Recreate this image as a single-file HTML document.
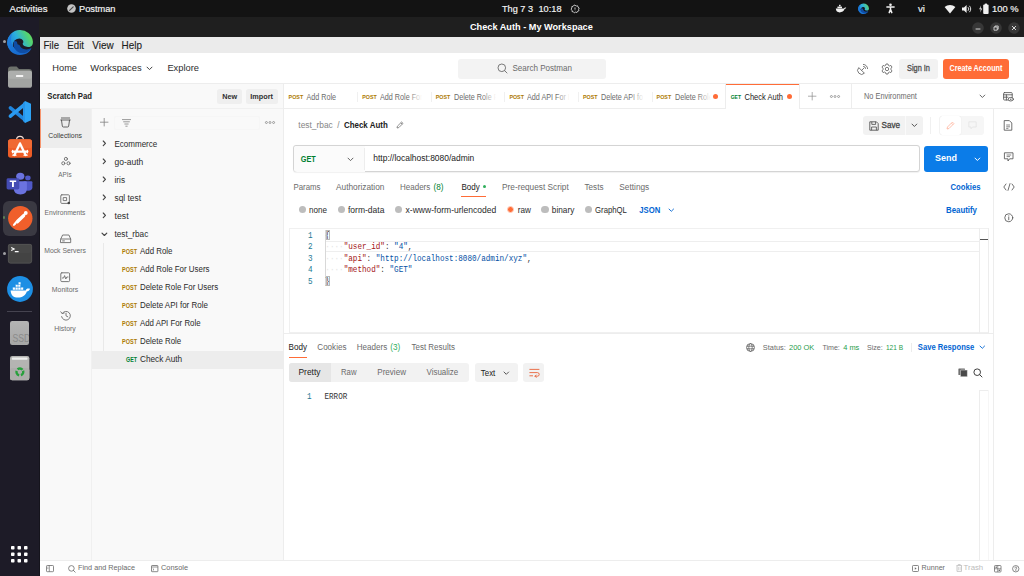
<!DOCTYPE html>
<html lang="vi">
<head>
<meta charset="utf-8">
<title>Check Auth - My Workspace</title>
<style>
*{box-sizing:border-box;margin:0;padding:0}
html,body{width:1024px;height:576px;overflow:hidden;background:#fff}
body{font-family:"Liberation Sans",sans-serif;font-size:9px;color:#212121;position:relative;-webkit-font-smoothing:antialiased}
.abs{position:absolute}
.t{position:absolute;white-space:nowrap;line-height:1.15;transform-origin:0 50%}
svg{position:absolute;overflow:visible}
</style>
</head>
<body>
<!-- ===== request tabs strip ===== -->
<div class="abs" style="left:284.00px;top:84.00px;width:740.00px;height:24.50px;background:#fff;"></div>
<div class="abs" style="left:284.00px;top:108.30px;width:441.50px;height:1.00px;background:#ededed;"></div>
<div class="abs" style="left:799.20px;top:108.30px;width:225.00px;height:1.00px;background:#ededed;"></div>
<span class="t" style="left:288px;top:93px;font-size:6.17px;font-weight:bold;transform:translate(0.60px,0.02px) scaleX(0.8684);color:#ad7a03;line-height:7px;">POST</span>
<span class="t" style="left:306px;top:92px;font-size:8.26px;transform:translate(0.50px,0.54px) scaleX(0.8677);color:#6b6b6b;line-height:9px;">Add Role</span>
<div class="abs" style="left:357.20px;top:91.50px;width:0.80px;height:10.00px;background:#f0f0f0;"></div>
<span class="t" style="left:362px;top:93px;font-size:6.17px;font-weight:bold;transform:translate(0.20px,0.02px) scaleX(0.8684);color:#ad7a03;line-height:7px;">POST</span>
<div class="abs" style="left:380.10px;top:90px;width:41.90px;height:13px;overflow:hidden">
<span class="t" style="left:0px;top:2px;font-size:8.26px;transform:translate(0.00px,0.54px) scaleX(0.8750);color:#6b6b6b;line-height:9px;">Add Role For Users</span>
</div>
<div class="abs" style="left:408.00px;top:90.00px;width:14.00px;height:13.00px;background:linear-gradient(90deg,rgba(255,255,255,0),#fff)"></div>
<div class="abs" style="left:430.80px;top:91.50px;width:0.80px;height:10.00px;background:#f0f0f0;"></div>
<span class="t" style="left:435px;top:93px;font-size:6.17px;font-weight:bold;transform:translate(0.80px,0.02px) scaleX(0.8684);color:#ad7a03;line-height:7px;">POST</span>
<div class="abs" style="left:453.70px;top:90px;width:42.30px;height:13px;overflow:hidden">
<span class="t" style="left:0px;top:2px;font-size:8.26px;transform:translate(0.00px,0.54px) scaleX(0.8750);color:#6b6b6b;line-height:9px;">Delete Role For Users</span>
</div>
<div class="abs" style="left:482.00px;top:90.00px;width:14.00px;height:13.00px;background:linear-gradient(90deg,rgba(255,255,255,0),#fff)"></div>
<div class="abs" style="left:504.40px;top:91.50px;width:0.80px;height:10.00px;background:#f0f0f0;"></div>
<span class="t" style="left:509px;top:93px;font-size:6.17px;font-weight:bold;transform:translate(0.40px,0.02px) scaleX(0.8684);color:#ad7a03;line-height:7px;">POST</span>
<div class="abs" style="left:527.30px;top:90px;width:42.20px;height:13px;overflow:hidden">
<span class="t" style="left:0px;top:2px;font-size:8.26px;transform:translate(0.00px,0.54px) scaleX(0.8750);color:#6b6b6b;line-height:9px;">Add API For Role</span>
</div>
<div class="abs" style="left:555.50px;top:90.00px;width:14.00px;height:13.00px;background:linear-gradient(90deg,rgba(255,255,255,0),#fff)"></div>
<div class="abs" style="left:578.00px;top:91.50px;width:0.80px;height:10.00px;background:#f0f0f0;"></div>
<span class="t" style="left:583px;top:93px;font-size:6.17px;font-weight:bold;transform:translate(0.00px,0.02px) scaleX(0.8684);color:#ad7a03;line-height:7px;">POST</span>
<div class="abs" style="left:600.90px;top:90px;width:42.60px;height:13px;overflow:hidden">
<span class="t" style="left:0px;top:2px;font-size:8.26px;transform:translate(0.00px,0.54px) scaleX(0.8750);color:#6b6b6b;line-height:9px;">Delete API for Role</span>
</div>
<div class="abs" style="left:629.50px;top:90.00px;width:14.00px;height:13.00px;background:linear-gradient(90deg,rgba(255,255,255,0),#fff)"></div>
<div class="abs" style="left:651.60px;top:91.50px;width:0.80px;height:10.00px;background:#f0f0f0;"></div>
<span class="t" style="left:656px;top:93px;font-size:6.17px;font-weight:bold;transform:translate(0.60px,0.02px) scaleX(0.8684);color:#ad7a03;line-height:7px;">POST</span>
<div class="abs" style="left:674.50px;top:90px;width:36.00px;height:13px;overflow:hidden">
<span class="t" style="left:0px;top:2px;font-size:8.26px;transform:translate(0.00px,0.54px) scaleX(0.8750);color:#6b6b6b;line-height:9px;">Delete Role</span>
</div>
<div class="abs" style="left:696.50px;top:90.00px;width:14.00px;height:13.00px;background:linear-gradient(90deg,rgba(255,255,255,0),#fff)"></div>
<div class="abs" style="left:713.10px;top:94.00px;width:5.00px;height:5.00px;background:#ff6c37;border-radius:3px"></div>
<div class="abs" style="left:725.20px;top:91.50px;width:0.80px;height:10.00px;background:#f0f0f0;"></div>
<div class="abs" style="left:725.60px;top:84.00px;width:73.60px;height:1.40px;background:#ff6c37;"></div>
<div class="abs" style="left:725.20px;top:84.00px;width:0.80px;height:24.50px;background:#ededed;"></div>
<div class="abs" style="left:798.80px;top:84.00px;width:0.80px;height:24.50px;background:#ededed;"></div>
<span class="t" style="left:730px;top:93px;font-size:6.17px;font-weight:bold;transform:translate(0.70px,0.02px) scaleX(0.8114);color:#007f31;line-height:7px;">GET</span>
<span class="t" style="left:744px;top:92px;font-size:8.26px;transform:translate(0.50px,0.54px) scaleX(0.9109);color:#212121;line-height:9px;">Check Auth</span>
<div class="abs" style="left:786.80px;top:94.00px;width:5.00px;height:5.00px;background:#ff6c37;border-radius:3px"></div>
<svg style="left:807.80px;top:92.30px;" width="8.4" height="8.4" viewBox="0 0 8.4 8.4" fill="none"><path d="M4.2 .4 V8 M.4 4.2 H8" stroke="#8a8a8a" stroke-width=".7" stroke-linecap="round"/></svg>
<svg style="left:830.00px;top:95.00px;" width="10" height="3" viewBox="0 0 10 3" fill="none"><circle cx="1.4" cy="1.5" r="1" stroke="#6b6b6b" stroke-width=".6"/><circle cx="5" cy="1.5" r="1" stroke="#6b6b6b" stroke-width=".6"/><circle cx="8.6" cy="1.5" r="1" stroke="#6b6b6b" stroke-width=".6"/></svg>
<div class="abs" style="left:851.00px;top:84.00px;width:0.80px;height:24.50px;background:#ededed;"></div>
<span class="t" style="left:864px;top:92px;font-size:8.17px;transform:translate(0.00px,0.11px) scaleX(0.9048);color:#6b6b6b;line-height:9px;">No Environment</span>
<svg style="left:979.10px;top:94.40px;" width="6.8" height="4.8" viewBox="0 0 6.8 4.8" fill="none"><path d="M1 1.08 L3.40 3.48 L5.80 1.08" stroke="#555" stroke-width="0.90" stroke-linecap="round" stroke-linejoin="round"/></svg>
<!-- ===== right sidebar ===== -->
<div class="abs" style="left:993.30px;top:108.50px;width:0.90px;height:451.50px;background:#ededed;"></div>
<svg style="left:1002.80px;top:91.50px;" width="11" height="10" viewBox="0 0 11 10" fill="none"><rect x=".6" y=".6" width="8.6" height="7.4" rx=".8" stroke="#555" stroke-width=".85" fill="none" stroke-linejoin="round" stroke-linecap="round"/><path d="M.6 2.8 H9.2 M3.4 2.8 V8 M.6 5.2 H5" stroke="#555" stroke-width=".85" fill="none" stroke-linejoin="round" stroke-linecap="round"/><ellipse cx="7.8" cy="7.2" rx="2.6" ry="1.8" fill="#fff" stroke="#555" stroke-width=".85" fill="none" stroke-linejoin="round" stroke-linecap="round"/><circle cx="7.8" cy="7.2" r=".7" fill="#555"/></svg>
<svg style="left:1004.30px;top:119.50px;" width="8.5" height="11" viewBox="0 0 8.5 11" fill="none"><path d="M.6 .6 H5.4 L7.8 3 V10.2 H.6Z" stroke="#555" stroke-width=".85" fill="none" stroke-linejoin="round" stroke-linecap="round"/><path d="M2.2 5 H6 M2.2 6.8 H6 M2.2 8.4 H4.4" stroke="#555" stroke-width=".7"/></svg>
<svg style="left:1003.80px;top:151.60px;" width="10" height="10" viewBox="0 0 10 10" fill="none"><path d="M.8 .8 H9 V6.8 H5.6 L4 9 V6.8 H.8Z" stroke="#555" stroke-width=".85" fill="none" stroke-linejoin="round" stroke-linecap="round"/><path d="M2.6 3 H7.2 M2.6 4.6 H6" stroke="#555" stroke-width=".7"/></svg>
<svg style="left:1002.80px;top:182.50px;" width="12" height="8" viewBox="0 0 12 8" fill="none"><path d="M3 1 L.8 4 L3 7 M9 1 L11.2 4 L9 7 M7 .6 L5 7.4" stroke="#555" stroke-width=".85" fill="none" stroke-linejoin="round" stroke-linecap="round"/></svg>
<svg style="left:1003.80px;top:213.00px;" width="9.5" height="9.5" viewBox="0 0 9.5 9.5" fill="none"><circle cx="4.75" cy="4.75" r="4" stroke="#555" stroke-width=".85" fill="none" stroke-linejoin="round" stroke-linecap="round"/><path d="M4.75 4.2 V6.8 M4.75 2.8 V3" stroke="#555" stroke-width=".85" fill="none" stroke-linejoin="round" stroke-linecap="round"/></svg>
<!-- ===== breadcrumb ===== -->
<span class="t" style="left:298px;top:119px;font-size:8.36px;transform:translate(0.30px,0.68px) scaleX(1.0034);color:#858585;line-height:10px;">test_rbac</span>
<span class="t" style="left:337px;top:119px;font-size:8.36px;transform:translate(0.30px,0.68px);color:#858585;line-height:10px;">/</span>
<span class="t" style="left:344px;top:119px;font-size:8.36px;font-weight:bold;transform:translate(0.00px,0.68px) scaleX(0.9494);color:#212121;line-height:10px;">Check Auth</span>
<svg style="left:395.50px;top:121.00px;" width="8" height="8" viewBox="0 0 8 8" fill="none"><path d="M1 7 L1.4 5.2 L5.6 1 L7 2.4 L2.8 6.6Z M4.8 1.8 L6.2 3.2" stroke="#6b6b6b" stroke-width=".75" stroke-linejoin="round"/></svg>
<div class="abs" style="left:862.50px;top:115.70px;width:60.00px;height:19.50px;background:#f2f2f2;border-radius:3px"></div>
<div class="abs" style="left:905.30px;top:115.70px;width:0.80px;height:19.50px;background:#fafafa;"></div>
<svg style="left:868.50px;top:120.50px;" width="10" height="10" viewBox="0 0 10 10" fill="none"><path d="M.8 .8 H7.4 L9.2 2.6 V9.2 H.8Z" stroke="#4a4a4a" stroke-width=".85" stroke-linejoin="round"/><path d="M2.8 .8 V3.4 H6.6 V.8 M2.6 9.2 V6 H7.4 V9.2" stroke="#4a4a4a" stroke-width=".8"/></svg>
<span class="t" style="left:881px;top:120px;font-size:8.55px;transform:translate(0.50px,0.24px) scaleX(0.9493);color:#444;line-height:10px;-webkit-text-stroke:.3px #444;">Save</span>
<svg style="left:911.10px;top:123.40px;" width="6.8" height="4.8" viewBox="0 0 6.8 4.8" fill="none"><path d="M1 1.08 L3.40 3.48 L5.80 1.08" stroke="#444" stroke-width="0.90" stroke-linecap="round" stroke-linejoin="round"/></svg>
<div class="abs" style="left:930.40px;top:117.00px;width:0.80px;height:17.00px;background:#f0f0f0;"></div>
<div class="abs" style="left:939.00px;top:115.70px;width:44.50px;height:19.50px;background:#f6f6f6;border-radius:3px"></div>
<div class="abs" style="left:939.50px;top:116.20px;width:21.50px;height:18.50px;background:#fff;border-radius:2.5px;box-shadow:0 0 1px rgba(0,0,0,.12)"></div>
<svg style="left:945.50px;top:120.50px;" width="9" height="9" viewBox="0 0 9 9" fill="none"><path d="M1 8 L1.5 6 L6.4 1.1 L7.9 2.6 L3 7.5Z M5.4 2.1 L6.9 3.6" stroke="#ffb39c" stroke-width=".8" stroke-linejoin="round"/></svg>
<svg style="left:967.50px;top:121.00px;" width="9" height="9" viewBox="0 0 9 9" fill="none"><path d="M.8 .8 H8.2 V6 H4.6 L3 7.8 V6 H.8Z" stroke="#e3e3e3" stroke-width=".8" stroke-linejoin="round"/></svg>
<!-- ===== url bar ===== -->
<div class="abs" style="left:292.70px;top:145.30px;width:627.00px;height:27.00px;background:#fff;border:1px solid #d4d4d4;border-radius:3px;box-shadow:0 .5px 1px rgba(0,0,0,.06)"></div>
<div class="abs" style="left:293.50px;top:146.00px;width:71.00px;height:25.50px;background:#fbfbfb;border-radius:3px 0 0 3px"></div>
<div class="abs" style="left:364.30px;top:148.00px;width:0.70px;height:21.50px;background:#ededed;"></div>
<span class="t" style="left:300px;top:153px;font-size:8.93px;font-weight:bold;transform:translate(0.80px,0.57px) scaleX(0.8171);color:#007f31;line-height:10px;">GET</span>
<svg style="left:346.50px;top:156.50px;" width="7" height="5" viewBox="0 0 7 5" fill="none"><path d="M1 1.12 L3.50 3.62 L6.00 1.12" stroke="#555" stroke-width="0.90" stroke-linecap="round" stroke-linejoin="round"/></svg>
<span class="t" style="left:373px;top:153px;font-size:8.36px;transform:translate(0.30px,0.38px) scaleX(1.0129);color:#212121;line-height:10px;">http://localhost:8080/admin</span>
<div class="abs" style="left:924.00px;top:146.00px;width:64.00px;height:25.50px;background:#0b7ce8;border-radius:3px"></div>
<span class="t" style="left:935px;top:153px;font-size:9.12px;font-weight:bold;transform:translate(0.00px,0.14px) scaleX(0.9867);color:#fff;line-height:10px;">Send</span>
<svg style="left:974.10px;top:156.80px;" width="6.8" height="4.8" viewBox="0 0 6.8 4.8" fill="none"><path d="M1 1.08 L3.40 3.48 L5.80 1.08" stroke="#fff" stroke-width="1.00" stroke-linecap="round" stroke-linejoin="round"/></svg>
<!-- ===== request sub tabs ===== -->
<span class="t" style="left:293px;top:181px;font-size:8.36px;transform:translate(0.50px,0.98px) scaleX(0.9375);color:#6b6b6b;line-height:10px;">Params</span>
<span class="t" style="left:336px;top:181px;font-size:8.36px;transform:translate(0.00px,0.98px) scaleX(0.9940);color:#6b6b6b;line-height:10px;">Authorization</span>
<span class="t" style="left:400px;top:181px;font-size:8.36px;transform:translate(0.00px,0.98px) scaleX(0.9590);color:#6b6b6b;line-height:10px;">Headers</span>
<span class="t" style="left:433px;top:181px;font-size:8.36px;transform:translate(0.50px,0.98px) scaleX(0.9788);color:#007f31;line-height:10px;">(8)</span>
<span class="t" style="left:461px;top:181px;font-size:8.36px;transform:translate(0.50px,0.98px) scaleX(0.9604);color:#212121;line-height:10px;">Body</span>
<div class="abs" style="left:483.00px;top:185.20px;width:3.00px;height:3.00px;background:#2fae5b;border-radius:2px"></div>
<div class="abs" style="left:461.00px;top:196.00px;width:25.00px;height:1.40px;background:#ff6c37;"></div>
<span class="t" style="left:502px;top:181px;font-size:8.36px;transform:translate(0.00px,0.98px) scaleX(0.9916);color:#6b6b6b;line-height:10px;">Pre-request Script</span>
<span class="t" style="left:584px;top:181px;font-size:8.36px;transform:translate(0.50px,0.98px) scaleX(0.9738);color:#6b6b6b;line-height:10px;">Tests</span>
<span class="t" style="left:619px;top:181px;font-size:8.36px;transform:translate(0.30px,0.98px) scaleX(0.9932);color:#6b6b6b;line-height:10px;">Settings</span>
<span class="t" style="left:950px;top:182px;font-size:8.17px;font-weight:bold;transform:translate(0.50px,0.91px) scaleX(0.9440);color:#0265d2;line-height:9px;">Cookies</span>
<!-- ===== body type ===== -->
<div class="abs" style="left:298.60px;top:206.10px;width:7.20px;height:7.20px;background:#bdbdbd;border-radius:4px"></div>
<span class="t" style="left:309px;top:204px;font-size:8.36px;transform:translate(0.00px,0.58px) scaleX(0.9680);color:#2b2b2b;line-height:10px;">none</span>
<div class="abs" style="left:337.60px;top:206.10px;width:7.20px;height:7.20px;background:#bdbdbd;border-radius:4px"></div>
<span class="t" style="left:348px;top:204px;font-size:8.36px;transform:translate(0.00px,0.58px) scaleX(1.0204);color:#2b2b2b;line-height:10px;">form-data</span>
<div class="abs" style="left:394.90px;top:206.10px;width:7.20px;height:7.20px;background:#bdbdbd;border-radius:4px"></div>
<span class="t" style="left:405px;top:204px;font-size:8.36px;transform:translate(0.50px,0.58px) scaleX(1.0256);color:#2b2b2b;line-height:10px;">x-www-form-urlencoded</span>
<div class="abs" style="left:541.40px;top:206.10px;width:7.20px;height:7.20px;background:#bdbdbd;border-radius:4px"></div>
<span class="t" style="left:551px;top:204px;font-size:8.36px;transform:translate(0.80px,0.58px) scaleX(0.9882);color:#2b2b2b;line-height:10px;">binary</span>
<div class="abs" style="left:584.60px;top:206.10px;width:7.20px;height:7.20px;background:#bdbdbd;border-radius:4px"></div>
<span class="t" style="left:595px;top:204px;font-size:8.36px;transform:translate(0.00px,0.58px) scaleX(0.9307);color:#2b2b2b;line-height:10px;">GraphQL</span>
<div class="abs" style="left:506.90px;top:205.90px;width:7.60px;height:7.60px;background:#ff6c37;border-radius:4px;border:1.4px solid #ffd3c2"></div>
<span class="t" style="left:517px;top:204px;font-size:8.36px;transform:translate(0.80px,0.58px) scaleX(0.9800);color:#2b2b2b;line-height:10px;">raw</span>
<span class="t" style="left:639px;top:204px;font-size:8.36px;font-weight:bold;transform:translate(0.30px,0.58px) scaleX(0.9225);color:#0265d2;line-height:10px;">JSON</span>
<svg style="left:668.40px;top:207.90px;" width="6.6" height="4.6" viewBox="0 0 6.6 4.6" fill="none"><path d="M1 1.03 L3.30 3.33 L5.60 1.03" stroke="#0265d2" stroke-width="0.90" stroke-linecap="round" stroke-linejoin="round"/></svg>
<span class="t" style="left:946px;top:204px;font-size:8.36px;font-weight:bold;transform:translate(0.00px,0.58px) scaleX(0.9400);color:#0265d2;line-height:10px;">Beautify</span>
<!-- ===== request body editor ===== -->
<div class="abs" style="left:288.70px;top:228.30px;width:699.50px;height:105.00px;background:#fff;border:1px solid #f0f0f0;border-right:none"></div>
<div class="abs" style="left:979.00px;top:228.30px;width:0.80px;height:105.00px;background:#ededed;"></div>
<div class="abs" style="left:987.60px;top:228.30px;width:0.80px;height:105.00px;background:#ededed;"></div>
<div class="abs" style="left:979.50px;top:238.80px;width:8.40px;height:1.60px;background:#555;"></div>
<div class="abs" style="left:325.20px;top:240.80px;width:654.00px;height:10.90px;background:#fff;border-top:1px solid #eeeeee;border-bottom:1px solid #eeeeee"></div>
<div class="abs" style="left:325.20px;top:230.00px;width:0.70px;height:56.00px;background:#d8d8d8;"></div>
<span class="t" style="left:308px;top:230px;font-size:8.50px;font-family:'Liberation Mono',monospace;transform:translate(0.00px,0.80px) scaleX(0.8988);color:#237893;line-height:10px;">1</span>
<span class="t" style="left:308px;top:242px;font-size:8.50px;font-family:'Liberation Mono',monospace;transform:translate(0.00px,0.30px) scaleX(0.8988);color:#237893;line-height:10px;">2</span>
<span class="t" style="left:308px;top:253px;font-size:8.50px;font-family:'Liberation Mono',monospace;transform:translate(0.00px,0.80px) scaleX(0.8988);color:#237893;line-height:10px;">3</span>
<span class="t" style="left:308px;top:265px;font-size:8.50px;font-family:'Liberation Mono',monospace;transform:translate(0.00px,0.30px) scaleX(0.8988);color:#237893;line-height:10px;">4</span>
<span class="t" style="left:308px;top:276px;font-size:8.50px;font-family:'Liberation Mono',monospace;transform:translate(0.00px,0.80px) scaleX(0.8988);color:#237893;line-height:10px;">5</span>
<span class="t" style="left:325px;top:242px;font-size:8.50px;font-family:'Liberation Mono',monospace;transform:translate(0.30px,0.30px) scaleX(0.8988);color:#e4e4e4;line-height:10px;">····</span>
<span class="t" style="left:325px;top:253px;font-size:8.50px;font-family:'Liberation Mono',monospace;transform:translate(0.30px,0.80px) scaleX(0.8988);color:#e4e4e4;line-height:10px;">····</span>
<span class="t" style="left:325px;top:265px;font-size:8.50px;font-family:'Liberation Mono',monospace;transform:translate(0.30px,0.30px) scaleX(0.8988);color:#e4e4e4;line-height:10px;">····</span>
<span class="t" style="left:325px;top:230px;font-size:8.50px;font-family:'Liberation Mono',monospace;transform:translate(0.30px,0.80px) scaleX(0.8988);color:#333;line-height:10px;">{</span>
<span class="t" style="left:343px;top:242px;font-size:8.50px;font-family:'Liberation Mono',monospace;transform:translate(0.64px,0.30px) scaleX(0.8988);color:#a31515;line-height:10px;">&quot;user_id&quot;</span>
<span class="t" style="left:384px;top:242px;font-size:8.50px;font-family:'Liberation Mono',monospace;transform:translate(0.90px,0.30px) scaleX(0.8988);color:#333;line-height:10px;">:&nbsp;</span>
<span class="t" style="left:394px;top:242px;font-size:8.50px;font-family:'Liberation Mono',monospace;transform:translate(0.07px,0.30px) scaleX(0.8988);color:#0451a5;line-height:10px;">&quot;4&quot;</span>
<span class="t" style="left:407px;top:242px;font-size:8.50px;font-family:'Liberation Mono',monospace;transform:translate(0.83px,0.30px) scaleX(0.8988);color:#333;line-height:10px;">,</span>
<span class="t" style="left:343px;top:253px;font-size:8.50px;font-family:'Liberation Mono',monospace;transform:translate(0.64px,0.80px) scaleX(0.8988);color:#a31515;line-height:10px;">&quot;api&quot;</span>
<span class="t" style="left:366px;top:253px;font-size:8.50px;font-family:'Liberation Mono',monospace;transform:translate(0.56px,0.80px) scaleX(0.8988);color:#333;line-height:10px;">:&nbsp;</span>
<span class="t" style="left:375px;top:253px;font-size:8.50px;font-family:'Liberation Mono',monospace;transform:translate(0.74px,0.80px) scaleX(0.8988);color:#0451a5;line-height:10px;">&quot;http://localhost:8080/admin/xyz&quot;</span>
<span class="t" style="left:527px;top:253px;font-size:8.50px;font-family:'Liberation Mono',monospace;transform:translate(0.04px,0.80px) scaleX(0.8988);color:#333;line-height:10px;">,</span>
<span class="t" style="left:343px;top:265px;font-size:8.50px;font-family:'Liberation Mono',monospace;transform:translate(0.64px,0.30px) scaleX(0.8988);color:#a31515;line-height:10px;">&quot;method&quot;</span>
<span class="t" style="left:380px;top:265px;font-size:8.50px;font-family:'Liberation Mono',monospace;transform:translate(0.32px,0.30px) scaleX(0.8988);color:#333;line-height:10px;">:&nbsp;</span>
<span class="t" style="left:389px;top:265px;font-size:8.50px;font-family:'Liberation Mono',monospace;transform:translate(0.49px,0.30px) scaleX(0.8988);color:#0451a5;line-height:10px;">&quot;GET&quot;</span>
<span class="t" style="left:325px;top:276px;font-size:8.50px;font-family:'Liberation Mono',monospace;transform:translate(0.30px,0.80px) scaleX(0.8988);color:#333;line-height:10px;">}</span>
<div class="abs" style="left:325.60px;top:229.80px;width:4.00px;height:10.40px;background:transparent;border:.6px solid #b9b9b9"></div>
<div class="abs" style="left:325.60px;top:275.80px;width:4.00px;height:10.40px;background:transparent;border:.6px solid #b9b9b9"></div>
<!-- ===== response ===== -->
<div class="abs" style="left:284.00px;top:333.40px;width:709.30px;height:0.90px;background:#ededed;"></div>
<span class="t" style="left:288px;top:341px;font-size:8.36px;transform:translate(0.50px,0.98px) scaleX(0.9709);color:#212121;line-height:10px;">Body</span>
<div class="abs" style="left:288.50px;top:356.50px;width:18.50px;height:1.40px;background:#ff6c37;"></div>
<span class="t" style="left:317px;top:341px;font-size:8.36px;transform:translate(0.30px,0.98px) scaleX(0.9668);color:#6b6b6b;line-height:10px;">Cookies</span>
<span class="t" style="left:356px;top:341px;font-size:8.36px;transform:translate(0.80px,0.98px) scaleX(0.9653);color:#6b6b6b;line-height:10px;">Headers</span>
<span class="t" style="left:390px;top:341px;font-size:8.36px;transform:translate(0.30px,0.98px) scaleX(0.9788);color:#2fae5b;line-height:10px;">(3)</span>
<span class="t" style="left:411px;top:341px;font-size:8.36px;transform:translate(0.50px,0.98px) scaleX(0.9554);color:#6b6b6b;line-height:10px;">Test Results</span>
<svg style="left:745.50px;top:342.70px;" width="9" height="9" viewBox="0 0 9 9" fill="none"><circle cx="4.5" cy="4.5" r="3.9" stroke="#555" stroke-width=".8"/><ellipse cx="4.5" cy="4.5" rx="1.7" ry="3.9" stroke="#555" stroke-width=".7"/><path d="M.7 3.2 H8.3 M.7 5.8 H8.3" stroke="#555" stroke-width=".7"/></svg>
<span class="t" style="left:762px;top:342px;font-size:7.50px;transform:translate(0.80px,0.68px) scaleX(0.9846);color:#6b6b6b;line-height:9px;">Status:</span>
<span class="t" style="left:789px;top:342px;font-size:7.50px;transform:translate(0.00px,0.68px) scaleX(0.9941);color:#1f9d4c;line-height:9px;">200 OK</span>
<span class="t" style="left:822px;top:342px;font-size:7.50px;transform:translate(0.40px,0.68px) scaleX(0.9414);color:#6b6b6b;line-height:9px;">Time:</span>
<span class="t" style="left:843px;top:342px;font-size:7.50px;transform:translate(0.20px,0.68px) scaleX(0.9900);color:#1f9d4c;line-height:9px;">4 ms</span>
<span class="t" style="left:867px;top:342px;font-size:7.50px;transform:translate(0.00px,0.68px) scaleX(0.9470);color:#6b6b6b;line-height:9px;">Size:</span>
<span class="t" style="left:885px;top:342px;font-size:7.50px;transform:translate(0.90px,0.68px) scaleX(0.8719);color:#1f9d4c;line-height:9px;">121 B</span>
<div class="abs" style="left:910.80px;top:342.50px;width:0.80px;height:9.50px;background:#ececec;"></div>
<span class="t" style="left:917px;top:342px;font-size:8.17px;font-weight:bold;transform:translate(0.80px,0.91px) scaleX(0.9372);color:#0265d2;line-height:9px;">Save Response</span>
<svg style="left:978.90px;top:345.30px;" width="6.6" height="4.6" viewBox="0 0 6.6 4.6" fill="none"><path d="M1 1.03 L3.30 3.33 L5.60 1.03" stroke="#0265d2" stroke-width="0.90" stroke-linecap="round" stroke-linejoin="round"/></svg>
<div class="abs" style="left:288.50px;top:363.00px;width:180.50px;height:18.80px;background:#f2f2f2;border-radius:3px"></div>
<div class="abs" style="left:288.50px;top:363.00px;width:42.30px;height:18.80px;background:#e6e6e6;border-radius:3px 0 0 3px"></div>
<span class="t" style="left:298px;top:368px;font-size:8.17px;transform:translate(0.50px,0.41px) scaleX(1.0310);color:#212121;line-height:9px;">Pretty</span>
<span class="t" style="left:341px;top:368px;font-size:8.17px;transform:translate(0.00px,0.41px) scaleX(0.9484);color:#6b6b6b;line-height:9px;">Raw</span>
<span class="t" style="left:377px;top:368px;font-size:8.17px;transform:translate(0.30px,0.41px) scaleX(0.9877);color:#6b6b6b;line-height:9px;">Preview</span>
<span class="t" style="left:426px;top:368px;font-size:8.17px;transform:translate(0.50px,0.41px) scaleX(0.9770);color:#6b6b6b;line-height:9px;">Visualize</span>
<div class="abs" style="left:474.50px;top:363.00px;width:43.30px;height:18.80px;background:#f2f2f2;border-radius:3px"></div>
<span class="t" style="left:480px;top:367px;font-size:8.55px;transform:translate(0.80px,0.54px) scaleX(0.9248);color:#212121;line-height:10px;">Text</span>
<svg style="left:503.20px;top:370.70px;" width="6.6" height="4.6" viewBox="0 0 6.6 4.6" fill="none"><path d="M1 1.03 L3.30 3.33 L5.60 1.03" stroke="#444" stroke-width="0.90" stroke-linecap="round" stroke-linejoin="round"/></svg>
<div class="abs" style="left:523.20px;top:363.00px;width:21.30px;height:18.80px;background:#f2f2f2;border-radius:3px"></div>
<svg style="left:528.50px;top:367.50px;" width="11" height="10" viewBox="0 0 11 10" fill="none"><path d="M.8 1.4 H10 M.8 4.6 H8.4 A1.8 1.8 0 0 1 8.4 8.2 H6 M.8 7.8 H3.6 M7.2 7 L6 8.2 L7.2 9.4" stroke="#e8633a" stroke-width=".9" stroke-linecap="round" stroke-linejoin="round"/></svg>
<svg style="left:958.00px;top:367.60px;" width="10" height="9" viewBox="0 0 10 9" fill="none"><rect x=".4" y=".4" width="6.6" height="6.6" rx=".6" fill="#6a6a6a"/><rect x="2.4" y="2" width="7" height="6.8" rx=".6" fill="#4a4a4a" stroke="#fff" stroke-width=".5"/></svg>
<svg style="left:973.00px;top:367.50px;" width="10" height="10" viewBox="0 0 10 10" fill="none"><circle cx="4.2" cy="4.2" r="3.3" stroke="#3f3f3f" stroke-width="1"/><path d="M6.6 6.6 L9 9" stroke="#3f3f3f" stroke-width="1" stroke-linecap="round"/></svg>
<span class="t" style="left:307px;top:391px;font-size:8.50px;font-family:'Liberation Mono',monospace;transform:translate(0.00px,0.80px) scaleX(0.8988);color:#237893;line-height:10px;">1</span>
<span class="t" style="left:324px;top:391px;font-size:8.50px;font-family:'Liberation Mono',monospace;transform:translate(0.50px,0.80px) scaleX(0.8939);color:#333;line-height:10px;">ERROR</span>
<div class="abs" style="left:979.00px;top:389.50px;width:0.80px;height:170.50px;background:#ededed;"></div>
<div class="abs" style="left:987.60px;top:389.50px;width:0.80px;height:170.50px;background:#f6f6f6;"></div>
<div class="abs" style="left:979.00px;top:389.50px;width:9.40px;height:0.80px;background:#ededed;"></div>
<!-- ===== sidebar ===== -->
<div class="abs" style="left:39.50px;top:84.00px;width:244.00px;height:476.00px;background:#f9f9f9;"></div>
<div class="abs" style="left:282.50px;top:84.00px;width:1.00px;height:476.00px;background:#ededed;"></div>
<div class="abs" style="left:39.50px;top:108.00px;width:243.00px;height:1.00px;background:#f0f0f0;"></div>
<span class="t" style="left:47px;top:91px;font-size:8.36px;font-weight:bold;transform:translate(0.30px,0.38px) scaleX(0.9251);color:#212121;line-height:10px;">Scratch Pad</span>
<div class="abs" style="left:217.00px;top:88.70px;width:25.20px;height:15.80px;background:#efefef;border-radius:2.5px"></div>
<span class="t" style="left:222px;top:92px;font-size:7.79px;font-weight:bold;transform:translate(0.30px,0.18px) scaleX(0.9365);color:#303030;line-height:9px;">New</span>
<div class="abs" style="left:245.50px;top:88.70px;width:32.00px;height:15.80px;background:#efefef;border-radius:2.5px"></div>
<span class="t" style="left:250px;top:92px;font-size:7.79px;font-weight:bold;transform:translate(0.30px,0.18px) scaleX(0.9367);color:#303030;line-height:9px;">Import</span>
<div class="abs" style="left:90.50px;top:109.00px;width:1.00px;height:451.00px;background:#f0f0f0;"></div>
<div class="abs" style="left:40.00px;top:108.50px;width:50.50px;height:39.00px;background:#ededed;"></div>
<div class="abs" style="left:39.50px;top:108.50px;width:0.90px;height:39.00px;background:#f7956e;"></div>
<svg style="left:59.50px;top:116.50px;" width="11" height="11" viewBox="0 0 11 11" fill="none"><path d="M1.4 1 H9.6 M.8 3 H10.2 M1.5 3.2 L2.3 9 Q2.4 10 3.4 10 H7.6 Q8.6 10 8.7 9 L9.5 3.2" stroke="#4a4a4a" stroke-width=".85" fill="none" stroke-linecap="round"/></svg>
<span class="t" style="left:48px;top:132px;font-size:6.93px;transform:translate(0.20px,0.09px) scaleX(0.9965);color:#3a3a3a;line-height:7px;">Collections</span>
<svg style="left:59.50px;top:155.50px;" width="11" height="12" viewBox="0 0 11 12" fill="none"><circle cx="5.9" cy="2.9" r="1.55" stroke="#6b6b6b" stroke-width=".9" fill="none" stroke-linecap="round" stroke-linejoin="round"/><circle cx="3.3" cy="7.3" r="1.55" stroke="#6b6b6b" stroke-width=".9" fill="none" stroke-linecap="round" stroke-linejoin="round"/><circle cx="8.5" cy="7.3" r="1.55" stroke="#6b6b6b" stroke-width=".9" fill="none" stroke-linecap="round" stroke-linejoin="round"/></svg>
<span class="t" style="left:58px;top:170px;font-size:6.93px;transform:translate(0.30px,0.59px) scaleX(0.9149);color:#6b6b6b;line-height:7px;">APIs</span>
<svg style="left:60.00px;top:194.00px;" width="11" height="11" viewBox="0 0 11 11" fill="none"><rect x=".8" y=".8" width="8.6" height="8.6" rx="1" stroke="#6b6b6b" stroke-width=".9" fill="none" stroke-linecap="round" stroke-linejoin="round"/><rect x="3.6" y="3.6" width="3" height="3" stroke="#6b6b6b" stroke-width=".9" fill="none" stroke-linecap="round" stroke-linejoin="round"/><circle cx="8.8" cy="9" r="1.3" fill="#444"/></svg>
<span class="t" style="left:44px;top:208px;font-size:6.93px;transform:translate(0.50px,0.89px) scaleX(0.9671);color:#6b6b6b;line-height:7px;">Environments</span>
<svg style="left:59.50px;top:233.50px;" width="11.5" height="9.5" viewBox="0 0 11.5 9.5" fill="none"><path d="M.8 5 L2.6 1 H8.9 L10.7 5 V8.6 H.8Z M.8 5 H10.7" stroke="#6b6b6b" stroke-width=".9" fill="none" stroke-linecap="round" stroke-linejoin="round"/><path d="M2.6 6.9 H4.4" stroke="#6b6b6b" stroke-width=".9" fill="none" stroke-linecap="round" stroke-linejoin="round"/></svg>
<span class="t" style="left:44px;top:247px;font-size:6.93px;transform:translate(0.20px,0.39px) scaleX(0.9862);color:#6b6b6b;line-height:7px;">Mock Servers</span>
<svg style="left:60.00px;top:271.50px;" width="10.5" height="10.5" viewBox="0 0 10.5 10.5" fill="none"><rect x=".8" y=".8" width="8.8" height="8.8" rx="1" stroke="#6b6b6b" stroke-width=".9" fill="none" stroke-linecap="round" stroke-linejoin="round"/><path d="M2.4 6 H3.6 L4.6 3.6 L5.8 7 L6.8 5 H8" stroke="#6b6b6b" stroke-width=".9" fill="none" stroke-linecap="round" stroke-linejoin="round"/></svg>
<span class="t" style="left:51px;top:286px;font-size:6.93px;transform:translate(0.80px,0.19px) scaleX(0.9966);color:#6b6b6b;line-height:7px;">Monitors</span>
<svg style="left:59.50px;top:309.50px;" width="11.5" height="11" viewBox="0 0 11.5 11" fill="none"><path d="M2.2 3.4 A4.4 4.4 0 1 1 1.6 6.6" stroke="#6b6b6b" stroke-width=".9" fill="none" stroke-linecap="round" stroke-linejoin="round"/><path d="M.8 1.8 L2.2 3.6 L4.2 3" stroke="#6b6b6b" stroke-width=".9" fill="none" stroke-linecap="round" stroke-linejoin="round"/><path d="M6 3.2 V5.8 L7.8 6.8" stroke="#6b6b6b" stroke-width=".9" fill="none" stroke-linecap="round" stroke-linejoin="round"/></svg>
<span class="t" style="left:54px;top:324px;font-size:6.93px;transform:translate(0.30px,0.59px) scaleX(0.9965);color:#6b6b6b;line-height:7px;">History</span>
<svg style="left:99.80px;top:118.30px;" width="8.4" height="8.4" viewBox="0 0 8.4 8.4" fill="none"><path d="M4.2 .4 V8 M.4 4.2 H8" stroke="#808080" stroke-width=".8" stroke-linecap="round"/></svg>
<svg style="left:122.00px;top:118.50px;" width="9" height="8" viewBox="0 0 9 8" fill="none"><path d="M.4 .6 H8.6 M1.6 2.8 H7.4 M2.8 5 H6.2 M3.8 7.2 H5.2" stroke="#808080" stroke-width=".8" stroke-linecap="round"/></svg>
<div class="abs" style="left:114.00px;top:115.50px;width:146.00px;height:14.00px;background:#f9f9f9;border:1px solid #f6f6f6;border-radius:2px"></div>
<svg style="left:122.00px;top:118.50px;" width="9" height="8" viewBox="0 0 9 8" fill="none"><path d="M.4 .6 H8.6 M1.6 2.8 H7.4 M2.8 5 H6.2 M3.8 7.2 H5.2" stroke="#808080" stroke-width=".8" stroke-linecap="round"/></svg>
<svg style="left:265.00px;top:121.00px;" width="10" height="3" viewBox="0 0 10 3" fill="none"><circle cx="1.4" cy="1.5" r="1" stroke="#6b6b6b" stroke-width=".6"/><circle cx="5" cy="1.5" r="1" stroke="#6b6b6b" stroke-width=".6"/><circle cx="8.6" cy="1.5" r="1" stroke="#6b6b6b" stroke-width=".6"/></svg>
<svg style="left:101.70px;top:140.30px;" width="4.6" height="6.6" viewBox="0 0 4.6 6.6" fill="none"><path d="M1.26 1 L3.45 3.30 L1.26 5.60" stroke="#444" stroke-width="1.15" stroke-linecap="round" stroke-linejoin="round"/></svg>
<span class="t" style="left:114px;top:138px;font-size:8.36px;transform:translate(0.50px,0.68px) scaleX(0.9598);color:#2b2b2b;line-height:10px;">Ecommerce</span>
<svg style="left:101.70px;top:158.40px;" width="4.6" height="6.6" viewBox="0 0 4.6 6.6" fill="none"><path d="M1.26 1 L3.45 3.30 L1.26 5.60" stroke="#444" stroke-width="1.15" stroke-linecap="round" stroke-linejoin="round"/></svg>
<span class="t" style="left:114px;top:156px;font-size:8.36px;transform:translate(0.50px,0.78px) scaleX(1.0158);color:#2b2b2b;line-height:10px;">go-auth</span>
<svg style="left:101.70px;top:176.20px;" width="4.6" height="6.6" viewBox="0 0 4.6 6.6" fill="none"><path d="M1.26 1 L3.45 3.30 L1.26 5.60" stroke="#444" stroke-width="1.15" stroke-linecap="round" stroke-linejoin="round"/></svg>
<span class="t" style="left:114px;top:174px;font-size:8.36px;transform:translate(0.50px,0.58px) scaleX(0.9833);color:#2b2b2b;line-height:10px;">iris</span>
<svg style="left:101.70px;top:194.40px;" width="4.6" height="6.6" viewBox="0 0 4.6 6.6" fill="none"><path d="M1.26 1 L3.45 3.30 L1.26 5.60" stroke="#444" stroke-width="1.15" stroke-linecap="round" stroke-linejoin="round"/></svg>
<span class="t" style="left:114px;top:192px;font-size:8.36px;transform:translate(0.50px,0.78px) scaleX(1.0006);color:#2b2b2b;line-height:10px;">sql test</span>
<svg style="left:101.70px;top:212.40px;" width="4.6" height="6.6" viewBox="0 0 4.6 6.6" fill="none"><path d="M1.26 1 L3.45 3.30 L1.26 5.60" stroke="#444" stroke-width="1.15" stroke-linecap="round" stroke-linejoin="round"/></svg>
<span class="t" style="left:114px;top:210px;font-size:8.36px;transform:translate(0.50px,0.78px) scaleX(1.0465);color:#2b2b2b;line-height:10px;">test</span>
<svg style="left:100.60px;top:231.60px;" width="6.8" height="4.8" viewBox="0 0 6.8 4.8" fill="none"><path d="M1 1.08 L3.40 3.48 L5.80 1.08" stroke="#444" stroke-width="1.15" stroke-linecap="round" stroke-linejoin="round"/></svg>
<span class="t" style="left:114px;top:228px;font-size:8.36px;transform:translate(0.50px,0.68px) scaleX(0.9830);color:#2b2b2b;line-height:10px;">test_rbac</span>
<div class="abs" style="left:103.00px;top:242.50px;width:0.80px;height:108.00px;background:#e9e9e9;"></div>
<div class="abs" style="left:91.50px;top:350.50px;width:191.50px;height:18.00px;background:#ededed;"></div>
<span class="t" style="left:122px;top:247px;font-size:6.27px;font-weight:bold;transform:translate(0.00px,0.96px) scaleX(0.8787);color:#ad7a03;line-height:7px;">POST</span>
<span class="t" style="left:140px;top:246px;font-size:8.36px;transform:translate(0.00px,0.48px) scaleX(0.9451);color:#2b2b2b;line-height:10px;">Add Role</span>
<span class="t" style="left:122px;top:265px;font-size:6.27px;font-weight:bold;transform:translate(0.00px,0.96px) scaleX(0.8787);color:#ad7a03;line-height:7px;">POST</span>
<span class="t" style="left:140px;top:264px;font-size:8.36px;transform:translate(0.00px,0.48px) scaleX(0.9482);color:#2b2b2b;line-height:10px;">Add Role For Users</span>
<span class="t" style="left:122px;top:283px;font-size:6.27px;font-weight:bold;transform:translate(0.00px,0.96px) scaleX(0.8787);color:#ad7a03;line-height:7px;">POST</span>
<span class="t" style="left:140px;top:282px;font-size:8.36px;transform:translate(0.00px,0.48px) scaleX(0.9469);color:#2b2b2b;line-height:10px;">Delete Role For Users</span>
<span class="t" style="left:122px;top:301px;font-size:6.27px;font-weight:bold;transform:translate(0.00px,0.86px) scaleX(0.8787);color:#ad7a03;line-height:7px;">POST</span>
<span class="t" style="left:140px;top:300px;font-size:8.36px;transform:translate(0.00px,0.38px) scaleX(0.9565);color:#2b2b2b;line-height:10px;">Delete API for Role</span>
<span class="t" style="left:122px;top:319px;font-size:6.27px;font-weight:bold;transform:translate(0.00px,0.96px) scaleX(0.8787);color:#ad7a03;line-height:7px;">POST</span>
<span class="t" style="left:140px;top:318px;font-size:8.36px;transform:translate(0.00px,0.48px) scaleX(0.9383);color:#2b2b2b;line-height:10px;">Add API For Role</span>
<span class="t" style="left:122px;top:337px;font-size:6.27px;font-weight:bold;transform:translate(0.00px,0.76px) scaleX(0.8787);color:#ad7a03;line-height:7px;">POST</span>
<span class="t" style="left:140px;top:336px;font-size:8.36px;transform:translate(0.00px,0.28px) scaleX(0.9455);color:#2b2b2b;line-height:10px;">Delete Role</span>
<span class="t" style="left:126px;top:355px;font-size:6.27px;font-weight:bold;transform:translate(0.00px,0.76px) scaleX(0.8535);color:#007f31;line-height:7px;">GET</span>
<span class="t" style="left:140px;top:354px;font-size:8.36px;transform:translate(0.00px,0.28px) scaleX(0.9871);color:#2b2b2b;line-height:10px;">Check Auth</span>
<!-- ===== status bar ===== -->
<div class="abs" style="left:39.50px;top:560.00px;width:984.50px;height:16.00px;background:#fff;border-top:1px solid #ededed"></div>
<svg style="left:45.50px;top:564.50px;" width="8" height="7.5" viewBox="0 0 8 7.5" fill="none"><rect x=".5" y=".5" width="7" height="6.2" rx=".8" stroke="#6b6b6b" stroke-width=".8"/><path d="M3.3 .5 V6.7 M1.4 2.2 H2.4 M1.4 3.6 H2.4" stroke="#6b6b6b" stroke-width=".7"/></svg>
<svg style="left:67.50px;top:564.50px;" width="8" height="8" viewBox="0 0 8 8" fill="none"><circle cx="3.4" cy="3.4" r="2.8" stroke="#6b6b6b" stroke-width=".8"/><path d="M5.4 5.4 L7.2 7.2" stroke="#6b6b6b" stroke-width=".8" stroke-linecap="round"/></svg>
<span class="t" style="left:78px;top:563px;font-size:7.22px;transform:translate(0.00px,0.18px) scaleX(1.0073);color:#6b6b6b;line-height:9px;">Find and Replace</span>
<svg style="left:151.00px;top:564.80px;" width="7.5" height="7.5" viewBox="0 0 7.5 7.5" fill="none"><rect x=".5" y=".5" width="6.4" height="6.2" rx=".6" stroke="#6b6b6b" stroke-width=".8"/><path d="M.5 2 H6.9 M1.8 3.6 L3 4.5 L1.8 5.4" stroke="#6b6b6b" stroke-width=".7"/></svg>
<span class="t" style="left:161px;top:563px;font-size:7.22px;transform:translate(0.00px,0.18px) scaleX(1.0193);color:#6b6b6b;line-height:9px;">Console</span>
<svg style="left:911.50px;top:564.90px;" width="7" height="7" viewBox="0 0 7 7" fill="none"><rect x=".5" y=".5" width="6" height="6" rx=".8" stroke="#6b6b6b" stroke-width=".8"/><path d="M2.8 2.2 L4.6 3.5 L2.8 4.8Z" fill="#6b6b6b"/></svg>
<span class="t" style="left:921px;top:563px;font-size:7.22px;transform:translate(0.60px,0.18px) scaleX(0.9883);color:#6b6b6b;line-height:9px;">Runner</span>
<svg style="left:955.50px;top:564.40px;" width="6.5" height="8" viewBox="0 0 6.5 8" fill="none"><path d="M.4 1.6 H6.1 M2.2 1.4 V.6 H4.3 V1.4 M1 1.8 V7.4 H5.5 V1.8" stroke="#bcbcbc" stroke-width=".8"/><path d="M2.4 3 V6.2 M4.1 3 V6.2" stroke="#bcbcbc" stroke-width=".6"/></svg>
<span class="t" style="left:963px;top:563px;font-size:7.22px;transform:translate(0.60px,0.18px) scaleX(1.0777);color:#bcbcbc;line-height:9px;">Trash</span>
<svg style="left:993.50px;top:564.80px;" width="7.5" height="7.5" viewBox="0 0 7.5 7.5" fill="none"><rect x=".5" y=".5" width="6.5" height="6.5" rx=".8" stroke="#6b6b6b" stroke-width=".8"/><path d="M3.75 .5 V7 M.5 3.75 H7" stroke="#6b6b6b" stroke-width=".7"/><rect x="1.5" y="1.5" width="1.4" height="1.4" fill="#6b6b6b"/><rect x="4.6" y="4.6" width="1.4" height="1.4" fill="#6b6b6b"/></svg>
<svg style="left:1011.50px;top:564.80px;" width="7.5" height="7.5" viewBox="0 0 7.5 7.5" fill="none"><circle cx="3.75" cy="3.75" r="3.2" stroke="#6b6b6b" stroke-width=".8"/><path d="M2.8 3 A1 1 0 1 1 3.8 4 V4.5 M3.8 5.4 V5.6" stroke="#6b6b6b" stroke-width=".7" stroke-linecap="round"/></svg>
<!-- ===== GNOME top bar ===== -->
<div class="abs" style="left:0.00px;top:0.00px;width:1024.00px;height:17.00px;background:#131313;"></div>
<span class="t" style="left:9px;top:2px;font-size:9.79px;transform:translate(0.50px,0.97px) scaleX(0.9843);color:#f2f2f2;line-height:11px;-webkit-text-stroke:.2px #f2f2f2;">Activities</span>
<svg style="left:67.00px;top:4.00px;" width="9" height="9" viewBox="0 0 9 9" fill="none"><circle cx="4.5" cy="4.5" r="4.3" fill="#c4c4c4"/><path d="M2.6 6.4 L6.2 2.8" stroke="#4a4a4a" stroke-width="1.1" stroke-linecap="round"/></svg>
<span class="t" style="left:79px;top:2px;font-size:9.79px;transform:translate(0.00px,0.97px) scaleX(0.9453);color:#f2f2f2;line-height:11px;-webkit-text-stroke:.2px #f2f2f2;">Postman</span>
<span class="t" style="left:502px;top:2px;font-size:9.79px;transform:translate(0.00px,0.97px) scaleX(0.9343);color:#f2f2f2;line-height:11px;-webkit-text-stroke:.2px #f2f2f2;">Thg 7 3</span>
<span class="t" style="left:538px;top:2px;font-size:9.79px;transform:translate(0.50px,0.97px) scaleX(0.9394);color:#f2f2f2;line-height:11px;-webkit-text-stroke:.2px #f2f2f2;">10:18</span>
<svg style="left:570.00px;top:3.50px;" width="10" height="10" viewBox="0 0 10 10" fill="none"><path d="M5 1.2 L6.2 2 L7.6 1.8 L8 3.2 L9.2 4 L8.6 5.3 L9 6.7 L7.7 7.2 L7 8.5 L5.6 8.1 L4.4 8.9 L3.4 7.8 L2 7.6 L2 6.2 L1 5.1 L1.9 4 L1.8 2.6 L3.2 2.3 L4 1.1 Z" stroke="#e8e8e8" stroke-width="0.8" fill="none"/><path d="M5 3.4v2.2M5 6.6v.2" stroke="#e8e8e8" stroke-width="0.8"/></svg>
<svg style="left:835.00px;top:3.00px;" width="12" height="11" viewBox="0 0 12 11" fill="none"><path d="M0.8 5.6 H9 C9.3 4.6 10 4.2 11.2 4.6 C10.9 5.6 10.2 6 9.6 6.1 C8.8 8.4 7 9.4 4.6 9.4 C2.4 9.4 1 8.2 0.8 5.6 Z" fill="#f0f0f0"/><rect x="2.4" y="3.6" width="4.6" height="1.6" fill="#f0f0f0"/><rect x="4" y="1.8" width="1.6" height="1.5" fill="#f0f0f0"/></svg>
<svg style="left:858.00px;top:3.00px;" width="11" height="11" viewBox="0 0 11 11" fill="none"><defs><linearGradient id="eg3" x1="0" y1=".7" x2="1" y2=".25"><stop offset="0" stop-color="#1b78da"/><stop offset=".5" stop-color="#2cb0de"/><stop offset="1" stop-color="#5fd665"/></linearGradient></defs>
<g transform="scale(.423)"><path d="M.2 13.4 A12.9 12.9 0 0 1 25.9 12.4 C26.2 16.4 23.8 18.2 21 18 C18 17.8 16 16.4 15.6 14.8 C16.4 13.8 16.6 12.6 16 11.4 C14.6 8.8 10.4 8.6 7.6 11.6 C5 14.6 5.4 19.6 8.4 23 C3.6 21.6 .2 18 .2 13.4Z" fill="url(#eg3)"/>
<path d="M.2 13.4 C.4 9.4 2.6 6.4 5.4 4.6 C3.4 8.4 3.4 13.6 6.4 17.8 C9.4 21.8 15 23.6 20.4 21.8 C22 21.2 23.4 20.2 24.4 19 C23.4 22.6 19.6 25.9 13 25.9 C6 25.9 .2 20.4 .2 13.4Z" fill="#1a74d6"/>
<path d="M7.6 11.6 C5.6 15 6.6 19.4 10 22.2 C13.6 25 19 24.6 22.6 21.2 C23.4 20.4 24 19.6 24.4 18.8 C21.4 21 17 20.8 14.4 18.8 C12.2 17 11.8 14.6 12.6 13 C11 13.4 9 12.8 7.6 11.6Z" fill="#0f4da4"/></g></svg>
<svg style="left:885.60px;top:3.40px;" width="9" height="10.5" viewBox="0 0 9 10.5" fill="none"><circle cx="4.5" cy="1.7" r="1.3" fill="#f0f0f0"/><path d="M.9 4 H8.1 M4.5 4 V6.6 M4.5 6.4 L3.2 9.6 M4.5 6.4 L5.8 9.6" stroke="#f0f0f0" stroke-width="1.5" stroke-linecap="round"/></svg>
<span class="t" style="left:918px;top:2px;font-size:9.79px;transform:translate(0.00px,0.97px) scaleX(0.9906);color:#f2f2f2;line-height:11px;-webkit-text-stroke:.2px #f2f2f2;">vi</span>
<svg style="left:944.00px;top:3.50px;" width="12" height="10" viewBox="0 0 12 10" fill="none"><path d="M6 9.4 L0.6 3 A8 8 0 0 1 11.4 3 Z" fill="#f0f0f0"/></svg>
<svg style="left:961.00px;top:3.50px;" width="12" height="10" viewBox="0 0 12 10" fill="none"><path d="M1 3.5 H3 L5.6 1 V9 L3 6.5 H1 Z" fill="#f0f0f0"/><path d="M7 3.2 A2.6 2.6 0 0 1 7 6.8 M8.4 1.8 A4.6 4.6 0 0 1 8.4 8.2" stroke="#f0f0f0" stroke-width="0.9" fill="none"/></svg>
<svg style="left:978.00px;top:2.50px;" width="12" height="12" viewBox="0 0 12 12" fill="none"><path d="M3 2.5 L1.2 6.2 H2.8 L2.2 9.5 L4.2 5.4 H2.6 Z" fill="#f0f0f0"/><rect x="5.2" y="1.6" width="5.4" height="9.4" rx="1" fill="#f0f0f0"/><rect x="6.8" y="0.6" width="2.2" height="1.4" fill="#f0f0f0"/></svg>
<span class="t" style="left:992px;top:2px;font-size:9.79px;transform:translate(0.00px,0.97px) scaleX(0.9552);color:#f2f2f2;line-height:11px;-webkit-text-stroke:.2px #f2f2f2;">100 %</span>
<!-- ===== dock ===== -->
<div class="abs" style="left:0.00px;top:17.00px;width:39.20px;height:559.00px;background:#1d1b27;"></div>
<svg style="left:6.80px;top:28.80px;" width="26" height="26" viewBox="0 0 26 26" fill="none"><defs>
<linearGradient id="eg1" x1="0" y1=".7" x2="1" y2=".25"><stop offset="0" stop-color="#1b78da"/><stop offset=".45" stop-color="#2cb0de"/><stop offset=".8" stop-color="#4fd07a"/><stop offset="1" stop-color="#6bdc55"/></linearGradient>
<linearGradient id="eg2" x1="0" y1="0" x2="1" y2="1"><stop offset="0" stop-color="#1f86e6"/><stop offset="1" stop-color="#1560c4"/></linearGradient>
</defs>
<path d="M.2 13.4 A12.9 12.9 0 0 1 25.9 12.4 C26.2 16.4 23.8 18.2 21 18 C18 17.8 16 16.4 15.6 14.8 C16.4 13.8 16.6 12.6 16 11.4 C14.6 8.8 10.4 8.6 7.6 11.6 C5 14.6 5.4 19.6 8.4 23 C3.6 21.6 .2 18 .2 13.4Z" fill="url(#eg1)"/>
<path d="M.2 13.4 C.4 9.4 2.6 6.4 5.4 4.6 C3.4 8.4 3.4 13.6 6.4 17.8 C9.4 21.8 15 23.6 20.4 21.8 C22 21.2 23.4 20.2 24.4 19 C23.4 22.6 19.6 25.9 13 25.9 C6 25.9 .2 20.4 .2 13.4Z" fill="url(#eg2)"/>
<path d="M7.6 11.6 C5.6 15 6.6 19.4 10 22.2 C13.6 25 19 24.6 22.6 21.2 C23.4 20.4 24 19.6 24.4 18.8 C21.4 21 17 20.8 14.4 18.8 C12.2 17 11.8 14.6 12.6 13 C11 13.4 9 12.8 7.6 11.6Z" fill="#0f4da4"/>
<circle cx="12.4" cy="13.6" r="2.4" fill="#1d1b27"/></svg>
<div class="abs" style="left:2.60px;top:40.40px;width:3.00px;height:3.00px;background:#a0a0a4;border-radius:2px"></div>
<svg style="left:8.00px;top:66.00px;" width="24" height="22" viewBox="0 0 24 22" fill="none"><path d="M0 3.6 Q0 .4 3 .4 H8.6 L11 3 H21 Q24 3 24 6 V9 H0Z" fill="#6c706b"/>
<rect x="0" y="4.8" width="24" height="17" rx="2.6" fill="#a2a4a2"/>
<rect x="0" y="4.8" width="24" height="8" rx="2.6" fill="#adafad"/>
<rect x="8" y="9" width="7.2" height="1.9" rx=".5" fill="#f4f4f4"/></svg>
<svg style="left:8.50px;top:101.30px;" width="23" height="22" viewBox="0 0 23 22" fill="none"><path d="M1.4 6.8 L16.6 19.4" stroke="#1f84dc" stroke-width="3.6" stroke-linecap="round"/>
<path d="M1.4 15.2 L16.6 2.6" stroke="#2a9af0" stroke-width="3.6" stroke-linecap="round"/>
<path d="M16 0 L22 2.8 V19.2 L16 22Z" fill="#2ea3f5"/>
<path d="M16 0 V22 L14 20 V2Z" fill="#2694ea"/></svg>
<svg style="left:8.00px;top:135.50px;" width="24" height="23" viewBox="0 0 24 23" fill="none"><path d="M8.6 3.8 A3.4 3.4 0 0 1 15.4 3.8" stroke="#f3ddd3" stroke-width="1.2" fill="none"/>
<rect x="0" y="3.2" width="24" height="18.6" rx="2.8" fill="#ee5d27"/>
<rect x="0" y="3.2" width="24" height="9" rx="2.8" fill="#f06a34"/>
<path d="M6.4 19 L12 7.4 L17.6 19 M4.6 15.6 H19.4" stroke="#fff" stroke-width="2.3" fill="none" stroke-linecap="round" stroke-linejoin="round"/>
<path d="M4.6 14.4 V16.8 M19.4 14.4 V16.8 M4.8 19.2 H8 M16 19.2 H19.2" stroke="#fff" stroke-width="1.2" stroke-linecap="round"/></svg>
<svg style="left:6.4px;top:171.6px" width="26.4" height="23" viewBox="0 0 27 27" preserveAspectRatio="none" fill="none"><circle cx="22.4" cy="7" r="2.8" fill="#5059c9"/><path d="M18 11 H26 Q27 11 27 12 V18 Q27 22 22.6 22 Q18 22 18 18Z" fill="#5059c9"/><circle cx="14.6" cy="5" r="4.2" fill="#6b73e0"/><path d="M8 11 H20 Q21.4 11 21.4 12.4 V20 Q21.4 26.4 14.8 26.4 Q8 26.4 8 20Z" fill="#6b73e0"/><rect x="0.6" y="7.4" width="13" height="13" rx="1.6" fill="#444cb4"/><path d="M3.8 10.8 H10.4 M7.1 10.8 V17.6" stroke="#fff" stroke-width="1.9"/></svg>
<div class="abs" style="left:2.70px;top:201.00px;width:34.00px;height:34.80px;background:#3a3942;border-radius:6px"></div>
<svg style="left:7.70px;top:205.80px;" width="24.6" height="24.6" viewBox="0 0 24.6 24.6" fill="none"><circle cx="12.3" cy="12.3" r="12.2" fill="#f05f2b"/>
<path d="M6.2 18.6 L9.6 14.4 L16.4 8.4" stroke="#fff" stroke-width="2.2" stroke-linecap="round" fill="none"/>
<path d="M9.4 16 L15.8 9.6" stroke="#fff" stroke-width="3" stroke-linecap="round"/>
<circle cx="17.8" cy="7" r="1.9" fill="#fff"/>
<path d="M4.6 20.2 L7.8 18.2 L6.6 17Z" fill="#fff"/></svg>
<div class="abs" style="left:2.70px;top:216.40px;width:2.80px;height:2.80px;background:#5b7f55;border-radius:2px"></div>
<svg style="left:8.00px;top:243.80px;" width="24" height="19.4" viewBox="0 0 24 19.4" fill="none"><rect x="0" y="0" width="24" height="19.4" rx="2.4" fill="#434343"/>
<rect x="0" y="0" width="24" height="9" rx="2.4" fill="#474747"/>
<rect x=".3" y=".3" width="23.4" height="18.8" rx="2.2" fill="none" stroke="#5a5a5a" stroke-width=".6"/>
<path d="M3.2 3.4 L6.2 5 L3.2 6.6 M6.8 7.6 H10.6" stroke="#fff" stroke-width="1.1" fill="none"/></svg>
<div class="abs" style="left:2.60px;top:251.80px;width:3.00px;height:3.00px;background:#a0a0a4;border-radius:2px"></div>
<svg style="left:7.00px;top:275.50px;" width="26" height="26" viewBox="0 0 26 26" fill="none"><circle cx="13" cy="13" r="12.9" fill="#1d8fe4"/>
<path d="M3.6 14.4 H18.8 C19.2 12.8 20.6 12.2 23 12.8 C22.4 14.6 21.2 15.4 19.8 15.6 C18.4 19.8 15.2 21.6 11 21.6 C6.6 21.6 4 19.4 3.6 14.4Z" fill="#fff"/>
<path d="M5.8 11.2 H16.2 V13.8 H5.8Z M8.4 8.6 H13.6 V11 H8.4Z M11.4 6.2 H13.6 V8.4 H11.4Z" fill="#fff"/>
<path d="M8.4 8.6V13.8M11 6.2V13.8M13.7 8.6V13.8M5.8 11.1H16.2M8.4 8.5H13.6" stroke="#1d8fe4" stroke-width=".5"/></svg>
<div class="abs" style="left:7.00px;top:310.50px;width:25.00px;height:0.80px;background:#45434f;"></div>
<div class="abs" style="left:9.9px;top:321px;width:19.4px;height:23.8px;border-radius:2.2px;background:linear-gradient(#b4b4b4,#a6a6a6);overflow:hidden">
<span class="t" style="left:2px;top:12px;font-size:10.07px;transform:translate(0.40px,0.06px) scaleX(0.8596);color:#8a8a8a;line-height:11px;">SSD</span>
</div>
<svg style="left:9.90px;top:355.80px;" width="19.4" height="24.2" viewBox="0 0 19.4 24.2" fill="none"><rect x="0" y="0" width="19.4" height="24.2" rx="2.2" fill="#b4b4b2"/>
<rect x="0" y="12" width="19.4" height="12.2" rx="2.2" fill="#adadab"/>
<rect x="1.8" y="1.6" width="15.8" height="2.2" rx=".8" fill="#ededed"/>
<circle cx="9.9" cy="15.9" r="3.4" stroke="#27a03c" stroke-width="2.4" stroke-dasharray="5.4 1.72" transform="rotate(-20 9.9 15.9)"/></svg>
<svg style="left:11.40px;top:546.40px;" width="16.5" height="16.5" viewBox="0 0 16.5 16.5" fill="none"><rect x="0" y="0" width="3.5" height="3.5" rx=".8" fill="#fff"/><rect x="0" y="6.5" width="3.5" height="3.5" rx=".8" fill="#fff"/><rect x="0" y="13" width="3.5" height="3.5" rx=".8" fill="#fff"/><rect x="6.5" y="0" width="3.5" height="3.5" rx=".8" fill="#fff"/><rect x="6.5" y="6.5" width="3.5" height="3.5" rx=".8" fill="#fff"/><rect x="6.5" y="13" width="3.5" height="3.5" rx=".8" fill="#fff"/><rect x="13" y="0" width="3.5" height="3.5" rx=".8" fill="#fff"/><rect x="13" y="6.5" width="3.5" height="3.5" rx=".8" fill="#fff"/><rect x="13" y="13" width="3.5" height="3.5" rx=".8" fill="#fff"/></svg>
<!-- ===== title bar ===== -->
<div class="abs" style="left:39.20px;top:17.00px;width:984.80px;height:20.00px;background:#1f1f1f;"></div>
<span class="t" style="left:470px;top:21px;font-size:9.69px;font-weight:bold;transform:translate(0.00px,0.33px) scaleX(0.9479);color:#fff;line-height:11px;">Check Auth - My Workspace</span>
<svg style="left:972.00px;top:21.60px;" width="12" height="12" viewBox="0 0 12 12" fill="none"><circle cx="6" cy="6" r="5.8" fill="#373737"/><path d="M3.6 7 H8.4" stroke="#e6e6e6" stroke-width=".9"/></svg>
<svg style="left:990.00px;top:21.60px;" width="12" height="12" viewBox="0 0 12 12" fill="none"><circle cx="6" cy="6" r="5.8" fill="#373737"/><path d="M4 5 H7.2 V8.2 H4Z M5 5 V4 H8.2 V7.2 H7.2" stroke="#e6e6e6" stroke-width=".8" fill="none"/></svg>
<svg style="left:1008.00px;top:21.60px;" width="12" height="12" viewBox="0 0 12 12" fill="none"><circle cx="6" cy="6" r="5.8" fill="#373737"/><path d="M4 4 L8 8 M8 4 L4 8" stroke="#e6e6e6" stroke-width=".9"/></svg>
<!-- ===== menu bar ===== -->
<div class="abs" style="left:39.20px;top:37.00px;width:984.80px;height:15.60px;background:#ebebeb;"></div>
<div class="abs" style="left:38.80px;top:37.00px;width:0.70px;height:539.00px;background:#15141c;"></div>
<span class="t" style="left:43px;top:39px;font-size:10.54px;transform:translate(0.50px,0.23px) scaleX(0.9123);color:#1c1c1c;line-height:12px;-webkit-text-stroke:.12px #1c1c1c;">File</span>
<span class="t" style="left:67px;top:39px;font-size:10.54px;transform:translate(0.30px,0.23px) scaleX(0.9191);color:#1c1c1c;line-height:12px;-webkit-text-stroke:.12px #1c1c1c;">Edit</span>
<span class="t" style="left:92px;top:39px;font-size:10.54px;transform:translate(0.30px,0.23px) scaleX(0.9442);color:#1c1c1c;line-height:12px;-webkit-text-stroke:.12px #1c1c1c;">View</span>
<span class="t" style="left:121px;top:39px;font-size:10.54px;transform:translate(0.60px,0.23px) scaleX(0.9407);color:#1c1c1c;line-height:12px;-webkit-text-stroke:.12px #1c1c1c;">Help</span>
<!-- ===== postman header ===== -->
<div class="abs" style="left:39.50px;top:52.60px;width:984.50px;height:31.60px;background:#fff;border-bottom:1px solid #ededed"></div>
<span class="t" style="left:52px;top:62px;font-size:9.50px;transform:translate(0.30px,0.07px) scaleX(0.9748);color:#2e2e2e;line-height:11px;">Home</span>
<span class="t" style="left:90px;top:62px;font-size:9.50px;transform:translate(0.30px,0.07px) scaleX(0.9868);color:#2e2e2e;line-height:11px;">Workspaces</span>
<svg style="left:146.00px;top:66.00px;" width="7" height="5" viewBox="0 0 7 5" fill="none"><path d="M1 1.12 L3.50 3.62 L6.00 1.12" stroke="#444" stroke-width="1.00" stroke-linecap="round" stroke-linejoin="round"/></svg>
<span class="t" style="left:167px;top:62px;font-size:9.50px;transform:translate(0.40px,0.07px) scaleX(0.9811);color:#2e2e2e;line-height:11px;">Explore</span>
<div class="abs" style="left:458.30px;top:59.00px;width:147.40px;height:19.50px;background:#f3f3f3;border-radius:3px"></div>
<svg style="left:496.50px;top:63.00px;" width="11" height="11" viewBox="0 0 11 11" fill="none"><circle cx="4.8" cy="4.8" r="3.8" stroke="#6b6b6b" stroke-width=".9"/><path d="M7.6 7.6 L10 10" stroke="#6b6b6b" stroke-width=".9" stroke-linecap="round"/></svg>
<span class="t" style="left:512px;top:63px;font-size:8.55px;transform:translate(0.50px,0.44px) scaleX(0.9414);color:#6b6b6b;line-height:10px;">Search Postman</span>
<svg style="left:856.50px;top:63.00px;" width="12" height="12" viewBox="0 0 12 12" fill="none"><path d="M1.8 4.6 L7.4 10.2 A3.96 3.96 0 0 1 1.8 4.6Z" stroke="#6b6b6b" stroke-width=".9" stroke-linejoin="round"/><path d="M4.6 7.4 L6.8 5.2" stroke="#6b6b6b" stroke-width=".9" stroke-linecap="round"/><path d="M6.4 1.4 A4.2 4.2 0 0 1 10.6 5.6 M6.6 3.4 A2.1 2.1 0 0 1 8.6 5.4" stroke="#6b6b6b" stroke-width=".9" stroke-linecap="round"/></svg>
<svg style="left:880.50px;top:63.00px;" width="12" height="12" viewBox="0 0 12 12" fill="none"><path d="M5 1 H7 L7.4 2.4 L8.6 3 L9.9 2.4 L11 4.1 L10 5.1 V6.9 L11 7.9 L9.9 9.6 L8.6 9 L7.4 9.6 L7 11 H5 L4.6 9.6 L3.4 9 L2.1 9.6 L1 7.9 L2 6.9 V5.1 L1 4.1 L2.1 2.4 L3.4 3 L4.6 2.4Z" stroke="#6b6b6b" stroke-width=".9" stroke-linejoin="round"/><circle cx="6" cy="6" r="1.7" stroke="#6b6b6b" stroke-width=".9"/></svg>
<div class="abs" style="left:899.00px;top:59.00px;width:38.50px;height:19.50px;background:#f2f2f2;border-radius:3px"></div>
<span class="t" style="left:907px;top:63px;font-size:8.36px;transform:translate(0.00px,0.48px) scaleX(0.8837);color:#4a4a4a;line-height:10px;-webkit-text-stroke:.28px #4a4a4a;">Sign In</span>
<div class="abs" style="left:943.00px;top:59.00px;width:66.00px;height:19.50px;background:#ff6c37;border-radius:3px"></div>
<span class="t" style="left:949px;top:63px;font-size:8.36px;font-weight:bold;transform:translate(0.50px,0.48px) scaleX(0.8622);color:#fff;line-height:10px;">Create Account</span>
</body>
</html>
